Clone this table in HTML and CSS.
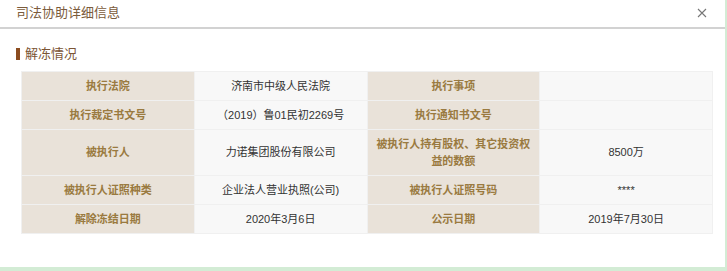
FILE: index.html
```html
<!DOCTYPE html>
<html lang="zh">
<head>
<meta charset="utf-8">
<link rel="stylesheet" href="styles.css">
</head>
<body>
<div class="dialog">
  <div class="header">
    <span class="title">司法协助详细信息</span>
    <span class="close">
      <svg width="10" height="10" viewBox="0 0 10 10"><path d="M1 1L9 9M9 1L1 9" stroke="#777" stroke-width="1.1" fill="none"/></svg>
    </span>
  </div>
  <div class="body">
    <div class="section-title"><span class="bar"></span>解冻情况</div>
    <table class="info">
      <tr>
        <td class="label">执行法院</td>
        <td class="value">济南市中级人民法院</td>
        <td class="label">执行事项</td>
        <td class="value"></td>
      </tr>
      <tr>
        <td class="label">执行裁定书文号</td>
        <td class="value">（2019）鲁01民初2269号</td>
        <td class="label">执行通知书文号</td>
        <td class="value"></td>
      </tr>
      <tr class="tall">
        <td class="label">被执行人</td>
        <td class="value">力诺集团股份有限公司</td>
        <td class="label">被执行人持有股权、其它投资权益的数额</td>
        <td class="value">8500万</td>
      </tr>
      <tr>
        <td class="label">被执行人证照种类</td>
        <td class="value">企业法人营业执照(公司)</td>
        <td class="label">被执行人证照号码</td>
        <td class="value">****</td>
      </tr>
      <tr>
        <td class="label">解除冻结日期</td>
        <td class="value">2020年3月6日</td>
        <td class="label">公示日期</td>
        <td class="value">2019年7月30日</td>
      </tr>
    </table>
  </div>
</div>
</body>
</html>
```
FILE: styles.css
```css
html, body {
  margin: 0;
  padding: 0;
  background: #d3ecd5;
}
body {
  font-family: "Liberation Sans", "Noto Sans CJK SC", sans-serif;
  width: 727px;
  height: 271px;
  overflow: hidden;
}
.dialog {
  width: 725px;
  height: 267px;
  background: #fff;
}
.header {
  height: 27px;
  border-bottom: 2px solid #d2d2d2;
  display: flex;
  align-items: center;
  justify-content: space-between;
  padding: 0 18px 0 16px;
}
.title {
  font-size: 13px;
  color: #7b5b3b;
  line-height: 18px;
  margin-top: -2px;
}
.close {
  display: flex;
  width: 10px;
  height: 10px;
  margin-top: -1px;
}
.body {
  padding: 16px 12px 0 16px;
}
.section-title {
  display: flex;
  align-items: center;
  font-size: 13px;
  color: #7b5535;
  line-height: 18px;
  height: 18px;
}
.bar {
  display: inline-block;
  width: 4px;
  height: 12px;
  background: #8b4c1f;
  margin-right: 5px;
}
.info {
  margin: 8px 0 0 5px;
  width: 692px;
  border-collapse: collapse;
  table-layout: fixed;
  font-size: 11px;
}
.info td {
  border: 1px solid #f0f0f0;
  text-align: center;
  height: 28px;
  padding: 0 8px;
  line-height: 17px;
}
.info tr.tall td {
  height: 45px;
}
.info td.label {
  background: #e9e2d9;
  color: #9a7a40;
  font-weight: bold;
}
.info td.value {
  background: #f8f8f8;
  color: #333;
}
```
